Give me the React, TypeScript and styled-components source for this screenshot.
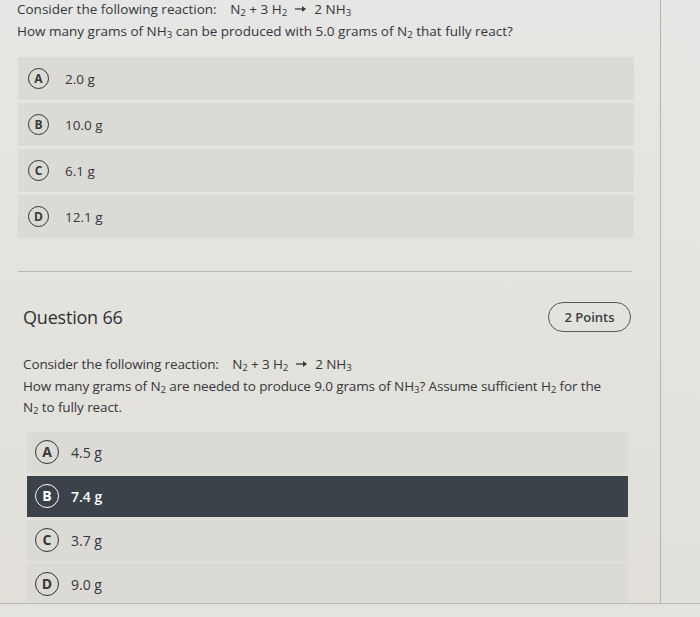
import React from 'react';
import styled, { createGlobalStyle } from 'styled-components';

const GlobalStyle = createGlobalStyle`
  html, body {
    margin: 0;
    padding: 0;
    background: #e4e3df;
  }
  body {
    font-family: 'Open Sans', 'Noto Sans', 'Liberation Sans', sans-serif;
    color: #35383c;
  }
`;

const Frame = styled.div`
  display: flex;
  width: 700px;
  height: 603px;
  border-bottom: 1px solid #b9b8b2;
  overflow: hidden;
`;

const Main = styled.div`
  width: 660px;
  flex: none;
  border-right: 1px solid #b4b3ad;
  background: linear-gradient(#e6e6e4, #e3e2dd 55%, #e1dfd8);
`;

const Side = styled.div`
  flex: 1;
  background: linear-gradient(#e7e7e5, #e2e0da);
`;

const Prompt = styled.div<{ $indent: number; $lead: number; $track?: number }>`
  padding-left: ${(p) => p.$indent}px;
  font-size: 13.5px;
  line-height: ${(p) => p.$lead}px;
  letter-spacing: ${(p) => p.$track ?? 0}px;
  color: #34373b;
  sub {
    font-size: 0.72em;
    vertical-align: -0.25em;
    line-height: 0;
  }
`;

const FirstLine = styled.div`
  margin-top: -2px;
`;

const Reaction = styled.span`
  margin-left: 10px;
`;

const Arrow = styled.svg`
  display: inline-block;
  width: 12px;
  height: 8px;
  margin: 0 7px 0 8px;
  vertical-align: 1px;
`;

const Options = styled.div<{ $left: number; $width: number; $top: number }>`
  display: flex;
  flex-direction: column;
  gap: 3px;
  margin: ${(p) => p.$top}px 0 0 ${(p) => p.$left}px;
  width: ${(p) => p.$width}px;
`;

const Option = styled.div<{ $height: number; $pad: number; $gap: number; $selected?: boolean }>`
  display: flex;
  align-items: center;
  gap: ${(p) => p.$gap}px;
  height: ${(p) => p.$height}px;
  padding-left: ${(p) => p.$pad}px;
  background: ${(p) => (p.$selected ? '#3c424a' : '#dbdad5')};
  color: ${(p) => (p.$selected ? '#ffffff' : '#35383c')};
`;

const Badge = styled.span<{ $size: number; $selected?: boolean }>`
  display: flex;
  align-items: center;
  justify-content: center;
  box-sizing: border-box;
  width: ${(p) => p.$size}px;
  height: ${(p) => p.$size}px;
  border-radius: 50%;
  border: 1.6px solid ${(p) => (p.$selected ? '#ffffff' : '#2f3236')};
  font-size: ${(p) => Math.round(p.$size * 0.58)}px;
  font-weight: 700;
  line-height: 1;
`;

const Answer = styled.span<{ $size: number; $selected?: boolean }>`
  font-size: ${(p) => p.$size}px;
  font-weight: ${(p) => (p.$selected ? 600 : 400)};
`;

const Divider = styled.hr`
  margin: 33px 0 0 18px;
  width: 614px;
  border: none;
  border-top: 1px solid #b9b8b2;
`;

const Header = styled.div`
  display: flex;
  align-items: center;
  justify-content: space-between;
  margin: 30px 0 0 23px;
  width: 608px;
`;

const Title = styled.h2`
  margin: 0;
  font-size: 18px;
  font-weight: 400;
  letter-spacing: -0.2px;
  color: #2e3135;
`;

const Points = styled.span`
  display: flex;
  align-items: center;
  justify-content: center;
  box-sizing: border-box;
  width: 83px;
  height: 30px;
  border: 1px solid #55585c;
  border-radius: 15px;
  font-size: 13px;
  font-weight: 600;
  color: #3a3d41;
`;

const Spacer = styled.div<{ $h: number }>`
  height: ${(p) => p.$h}px;
`;

type Choice = { key: string; text: string; selected?: boolean };

const first: Choice[] = [
  { key: 'A', text: '2.0 g' },
  { key: 'B', text: '10.0 g' },
  { key: 'C', text: '6.1 g' },
  { key: 'D', text: '12.1 g' },
];

const second: Choice[] = [
  { key: 'A', text: '4.5 g' },
  { key: 'B', text: '7.4 g', selected: true },
  { key: 'C', text: '3.7 g' },
  { key: 'D', text: '9.0 g' },
];

const Equation = () => (
  <Reaction>
    N<sub>2</sub> + 3 H<sub>2</sub>
    <Arrow viewBox="0 0 12 8" aria-label="yields">
      <path d="M0 4H10" stroke="#34373b" strokeWidth="1.3" />
      <path d="M7 1L11 4L7 7Z" fill="#34373b" />
    </Arrow>
    2 NH<sub>3</sub>
  </Reaction>
);

const App = () => {
  return (
    <>
      <GlobalStyle />
      <Frame>
        <Main>
          <Prompt $indent={17} $lead={22}>
            <FirstLine>
              Consider the following reaction: <Equation />
            </FirstLine>
            <div>
              How many grams of NH<sub>3</sub> can be produced with 5.0 grams of N<sub>2</sub> that fully
              react?
            </div>
          </Prompt>

          <Options $left={18} $width={616} $top={15}>
            {first.map((c) => (
              <Option key={c.key} $height={43} $pad={10} $gap={16}>
                <Badge $size={21}>{c.key}</Badge>
                <Answer $size={13.5}>{c.text}</Answer>
              </Option>
            ))}
          </Options>

          <Divider />

          <Header>
            <Title>Question 66</Title>
            <Points>2 Points</Points>
          </Header>

          <Spacer $h={22} />

          <Prompt $indent={23} $lead={21.5} $track={-0.12}>
            <div>
              Consider the following reaction: <Equation />
            </div>
            <div>
              How many grams of N<sub>2</sub> are needed to produce 9.0 grams of NH<sub>3</sub>? Assume
              sufficient H<sub>2</sub> for the
            </div>
            <div>
              N<sub>2</sub> to fully react.
            </div>
          </Prompt>

          <Options $left={27} $width={601} $top={13}>
            {second.map((c) => (
              <Option key={c.key} $height={41} $pad={8} $gap={12} $selected={c.selected}>
                <Badge $size={24} $selected={c.selected}>
                  {c.key}
                </Badge>
                <Answer $size={14} $selected={c.selected}>
                  {c.text}
                </Answer>
              </Option>
            ))}
          </Options>
        </Main>
        <Side />
      </Frame>
    </>
  );
};

export default App;
